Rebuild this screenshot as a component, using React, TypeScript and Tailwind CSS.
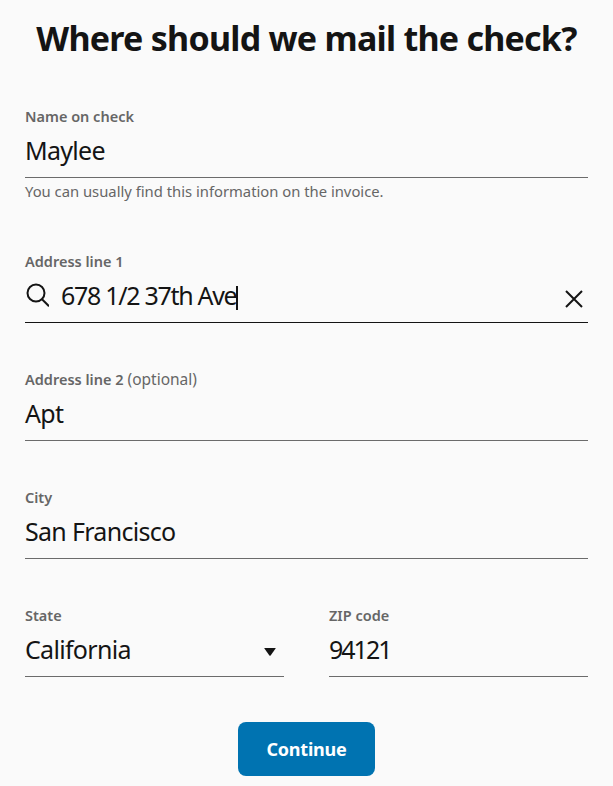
import React from "react";

function Field({ label, optional, children, cls = "", dark = false }: { label: string; optional?: string; children: React.ReactNode; cls?: string; dark?: boolean }) {
  return (
    <div className={cls}>
      <div className="h-[18px] text-[14.5px] leading-[18px] font-semibold text-[#666666]">
        {label}
        {optional && <span className="font-normal text-[15.5px]"> {optional}</span>}
      </div>
      <div className={`flex items-center h-[53px] pb-[2px] border-b text-[25px] leading-[30px] tracking-[-0.7px] text-[#141414] ${dark ? "border-[#141414]" : "border-[#6b6b6b]"}`}>
        {children}
      </div>
    </div>
  );
}

export default function App() {
  return (
    <div className="w-[613px] h-[786px] overflow-hidden bg-[#fafafa] px-[25px] font-['Noto_Sans',sans-serif]">
      <h1 className="pt-[16px] text-center text-[34px] leading-[44px] tracking-[-0.75px] font-bold text-[#141414] whitespace-nowrap">Where should we mail the check?</h1>
      <Field label="Name on check" cls="mt-[47px]">Maylee</Field>
      <p className="mt-[3px] text-[14.8px] leading-[20px] text-[#666666]">You can usually find this information on the invoice.</p>
      <Field label="Address line 1" cls="mt-[51px]" dark>
        <svg width="24" height="24" viewBox="0 0 24 24" fill="none" stroke="#141414" strokeWidth="2" className="mr-[12px]"><circle cx="11" cy="10" r="8.5"/><path d="M17 16.2 24 23.2"/></svg>
        <span className="tracking-[-1.3px]">678 1/2 37th Ave</span>
        <span className="w-[1.5px] h-[24px] mt-[6px] bg-[#141414]" />
        <svg width="20" height="20" viewBox="0 0 20 20" fill="none" stroke="#141414" strokeWidth="2" className="ml-auto mr-[4px] mt-[8px]"><path d="M2 2 18 18M18 2 2 18"/></svg>
      </Field>
      <Field label="Address line 2" optional="(optional)" cls="mt-[47px]">Apt</Field>
      <Field label="City" cls="mt-[47px]">San Francisco</Field>
      <div className="mt-[47px] flex gap-[45px]">
        <Field label="State" cls="flex-1">
          <span>California</span>
          <svg width="12" height="8" viewBox="0 0 12 8" className="ml-auto mr-[8px] mt-[5px]"><path d="M0.5 0H11.5Q12 0 11.6 0.6L6.6 7.4Q6 8 5.4 7.4L0.4 0.6Q0 0 0.5 0Z" fill="#141414"/></svg>
        </Field>
        <Field label="ZIP code" cls="flex-1"><span className="tracking-[-2px]">94121</span></Field>
      </div>
      <div className="mt-[45px] flex justify-center">
        <button className="w-[137px] h-[54px] rounded-[8px] bg-[#0073b1] text-white text-[18px] tracking-[-0.2px] font-bold">Continue</button>
      </div>
    </div>
  );
}
